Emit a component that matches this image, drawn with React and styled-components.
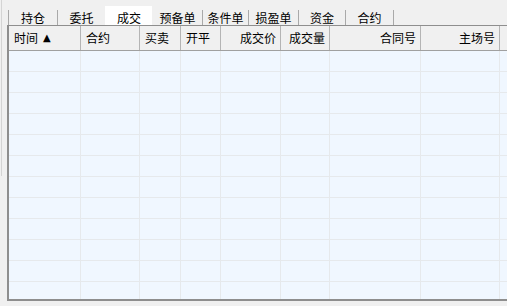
import React from "react";
import styled, { createGlobalStyle } from "styled-components";

const GlobalStyle = createGlobalStyle`
  html, body {
    margin: 0;
    padding: 0;
    background: #f0f0f0;
  }
  body {
    font-family: "Microsoft YaHei", "Noto Sans CJK SC", sans-serif;
    font-size: 12px;
    color: #000;
  }
`;

const COLS = "72px 59px 41px 40px 60px 49px 91px 79px 1fr";

const Page = styled.div`
  display: flex;
  width: 507px;
  height: 306px;
  overflow: hidden;
`;

const Splitter = styled.div`
  width: 8px;
  flex: none;
  display: flex;
  align-items: flex-start;
  &::before {
    content: "";
    display: block;
    margin-left: 1px;
    width: 1px;
    height: 176px;
    background: #d4d4d4;
  }
`;

const Main = styled.div`
  display: flex;
  flex-direction: column;
  width: 520px;
  flex: none;
  padding-top: 6px;
`;

const TabBar = styled.div`
  display: flex;
  align-items: flex-end;
  height: 19px;
`;

const Tab = styled.div`
  box-sizing: border-box;
  width: ${(p) => p.$w}px;
  height: ${(p) => (p.$active ? 19 : 15)}px;
  padding-top: ${(p) => (p.$active ? 4 : 0)}px;
  background: ${(p) => (p.$active ? "#ffffff" : "transparent")};
  border-left: 1px solid ${(p) => (p.$line ? "#a9a9a9" : "transparent")};
  line-height: 15px;
  text-align: center;
  white-space: nowrap;
`;

const TabEnd = styled.div`
  width: 1px;
  height: 15px;
  background: #a9a9a9;
`;

const Grid = styled.div`
  border-top: 1px solid #8e8e8e;
  border-left: 2px solid #8e8e8e;
  border-bottom: 2px solid #8e8e8e;
  margin-left: -1px;
  height: 273px;
  display: flex;
  flex-direction: column;
  overflow: hidden;
`;

const HeaderRow = styled.div`
  display: grid;
  grid-template-columns: ${COLS};
  height: 24px;
  border-bottom: 1px solid #a0a0a0;
  background: #f0f0f0;
  flex: none;
`;

const HeadCell = styled.div`
  display: flex;
  align-items: center;
  justify-content: ${(p) => (p.$right ? "flex-end" : "flex-start")};
  padding: 0 ${(p) => (p.$right ? 4 : 0)}px 0 ${(p) => (p.$right ? 0 : 5)}px;
  border-right: 1px solid #b4b4b4;
  white-space: nowrap;
  line-height: 16px;
  &:last-child {
    border-right: none;
  }
`;

const SortMark = styled.span`
  font-family: "DejaVu Sans", sans-serif;
  font-size: 10px;
  margin-left: 5px;
  margin-top: -1px;
`;

const Body = styled.div`
  flex: 1;
  background: #f0f7ff;
  overflow: hidden;
`;

const Row = styled.div`
  display: grid;
  grid-template-columns: ${COLS};
  height: 21px;
  box-sizing: border-box;
  border-bottom: 1px solid #e6e9ec;
`;

const Cell = styled.div`
  border-right: 1px solid #e6e9ec;
  &:last-child {
    border-right: none;
  }
`;

const tabs = [
  { label: "持仓", w: 49 },
  { label: "委托", w: 48 },
  { label: "成交", w: 47, active: true },
  { label: "预备单", w: 50 },
  { label: "条件单", w: 46 },
  { label: "损盈单", w: 50 },
  { label: "资金", w: 47 },
  { label: "合约", w: 48 },
];

const columns = [
  { label: "时间", sort: true },
  { label: "合约" },
  { label: "买卖" },
  { label: "开平" },
  { label: "成交价", right: true },
  { label: "成交量", right: true },
  { label: "合同号", right: true },
  { label: "主场号", right: true },
  { label: "" },
];

export default function App() {
  const activeIndex = tabs.findIndex((t) => t.active);
  return (
    <Page>
      <GlobalStyle />
      <Splitter />
      <Main>
        <TabBar>
          {tabs.map((t, i) => (
            <Tab
              key={t.label}
              $w={t.w}
              $active={t.active}
              $line={i !== activeIndex && i !== activeIndex + 1}
            >
              {t.label}
            </Tab>
          ))}
          <TabEnd />
        </TabBar>
        <Grid>
          <HeaderRow>
            {columns.map((c, i) => (
              <HeadCell key={i} $right={c.right}>
                {c.label}
                {c.sort && <SortMark>▲</SortMark>}
              </HeadCell>
            ))}
          </HeaderRow>
          <Body>
            {Array.from({ length: 12 }).map((_, r) => (
              <Row key={r}>
                {columns.map((c, i) => (
                  <Cell key={i} />
                ))}
              </Row>
            ))}
          </Body>
        </Grid>
      </Main>
    </Page>
  );
}
